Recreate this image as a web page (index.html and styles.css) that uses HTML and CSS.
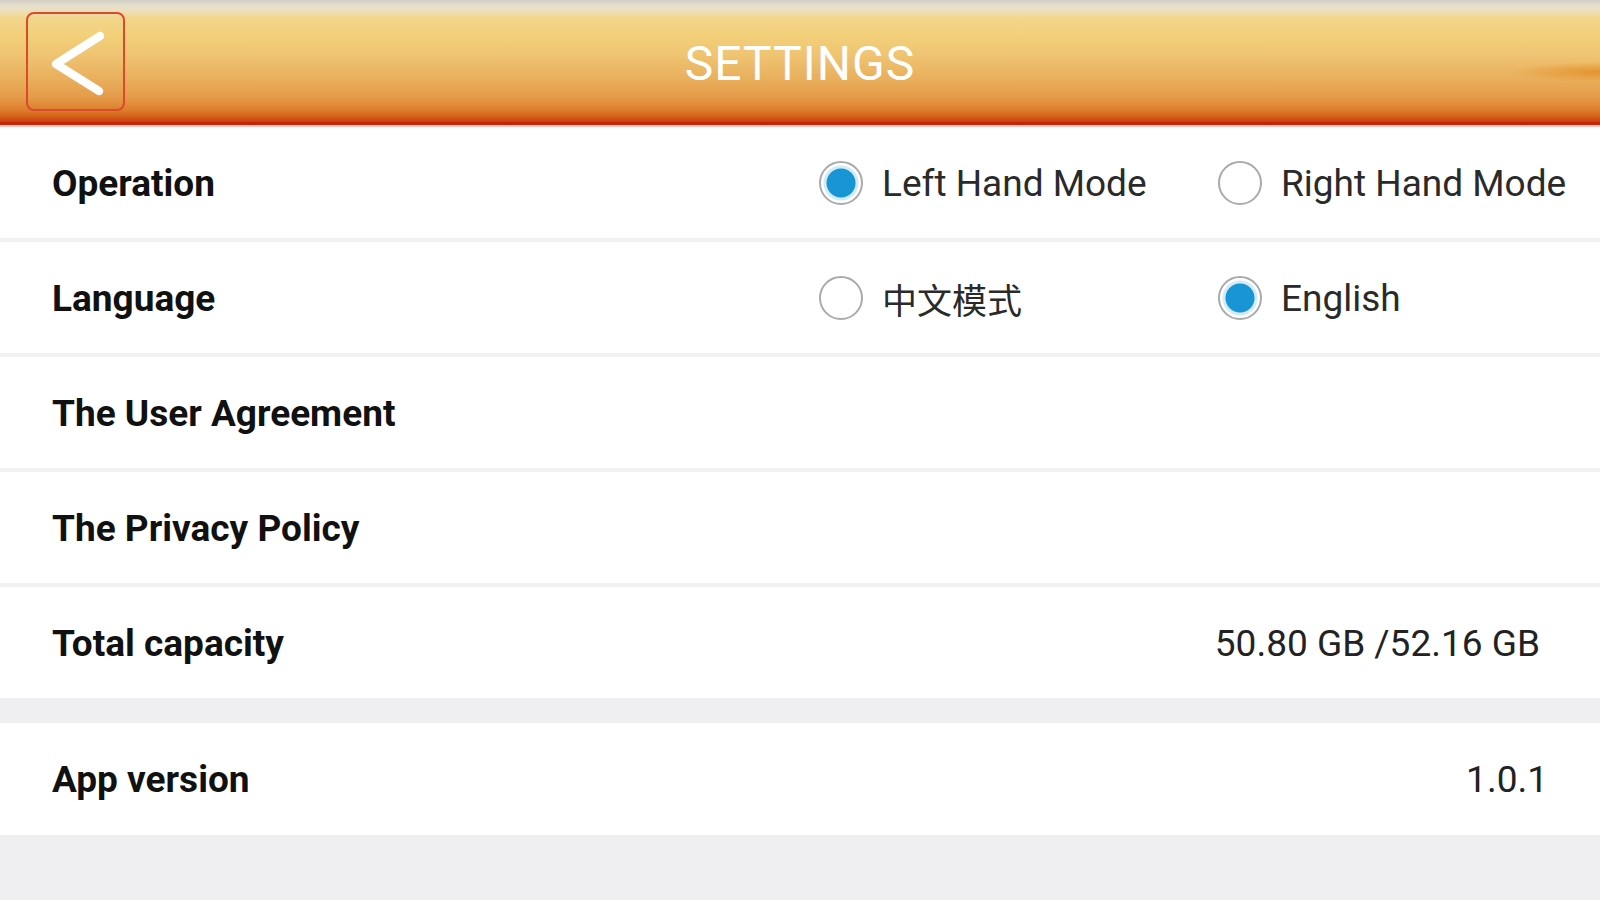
FILE: index.html
```html
<!DOCTYPE html>
<html lang="en">

<head>
    <meta charset="UTF-8">
    <meta name="viewport" content="width=device-width, initial-scale=1.0">
    <title>Settings</title>
    <link rel="stylesheet" href="styles.css">
</head>

<body>
    <header class="topbar">
        <div class="topbar-left">
            <button class="back-btn" aria-label="Back">
                <svg width="95" height="95" viewBox="0 0 95 95">
                    <polyline points="72,22 28,50 71,77" fill="none" stroke="#fff" stroke-width="8.5" stroke-linecap="round" stroke-linejoin="round" />
                </svg>
            </button>
        </div>
        <h1 class="title">SETTINGS</h1>
        <div></div>
    </header>

    <div class="group">
        <div class="row">
            <span class="label">Operation</span>
            <div class="options">
                <label class="option"><input type="radio" name="hand" checked> Left Hand Mode</label>
                <label class="option"><input type="radio" name="hand"> Right Hand Mode</label>
            </div>
        </div>
        <div class="row">
            <span class="label">Language</span>
            <div class="options">
                <label class="option cjk"><input type="radio" name="lang"> 中文模式</label>
                <label class="option"><input type="radio" name="lang" checked> English</label>
            </div>
        </div>
        <div class="row">
            <span class="label">The User Agreement</span>
        </div>
        <div class="row">
            <span class="label">The Privacy Policy</span>
        </div>
        <div class="row last">
            <span class="label">Total capacity</span>
            <span class="value">50.80 GB /52.16 GB</span>
        </div>
    </div>

    <div class="group">
        <div class="row last">
            <span class="label">App version</span>
            <span class="value version">1.0.1</span>
        </div>
    </div>
</body>

</html>
```

FILE: styles.css
```css
body {
    margin: 0;
    font-family: Roboto, "Noto Sans", sans-serif;
    background-color: #efeff2;
    color: #111;
}

.topbar {
    display: grid;
    grid-template-columns: 1fr auto 1fr;
    align-items: center;
    height: 122px;
    margin-bottom: 2px;
    border-bottom: 3px solid #c4240c;
    box-shadow: 0 2px 0 #f7c4bd;
    background:
        radial-gradient(ellipse 90px 10px at 1600px 72px, rgba(226, 136, 28, 0.75), transparent),
        linear-gradient(to bottom, #d2cec3 0px, #e3dece 5px, #ebe0c0 10px, #f2d68c 18px, #f3d07a 35px, #efc472 55px, #e9ae5b 80px, #e49a48 98px, #dd7f2c 110px, #d35e16 117px, #cc3c0e 122px);
}

.topbar-left {
    padding-left: 26px;
}

.back-btn {
    display: block;
    width: 99px;
    height: 99px;
    padding: 0;
    margin-top: 1px;
    border: 2px solid #dc4a2c;
    border-radius: 8px;
    background: transparent;
    cursor: pointer;
}

.back-btn svg {
    display: block;
}

.title {
    margin: 0;
    padding-top: 5px;
    font-size: 48px;
    font-weight: 400;
    letter-spacing: 1px;
    color: #fff;
}

.group {
    background: #fff;
}

.group + .group {
    margin-top: 25px;
}

.row {
    display: flex;
    align-items: center;
    height: 110px;
    padding: 1px 60px 0 52px;
    border-bottom: 4px solid #f1f1f3;
}

.row.last {
    height: 110px;
    border-bottom: none;
}

.group + .group .row.last {
    height: 111px;
}

.label {
    flex: 1;
    font-size: 37px;
    font-weight: 700;
}

.value {
    font-size: 37px;
    color: #222;
}

.value.version {
    margin-right: -8px;
}

.options {
    display: grid;
    grid-template-columns: 399px 1fr;
    width: 781px;
    margin-right: -60px;
}

.option {
    display: flex;
    align-items: center;
    gap: 19px;
    font-size: 37px;
    color: #2a2a2a;
}

.option.cjk {
    font-family: "Noto Sans CJK SC", sans-serif;
    font-size: 35px;
}

.option input {
    appearance: none;
    width: 44px;
    height: 44px;
    margin: 0;
    border: 2px solid #aaa;
    border-radius: 50%;
    background: #fff;
}

.option input:checked {
    background: radial-gradient(circle, #1795d4 0 14px, #d3eaf7 15px 17px, #fff 18px);
}
```
